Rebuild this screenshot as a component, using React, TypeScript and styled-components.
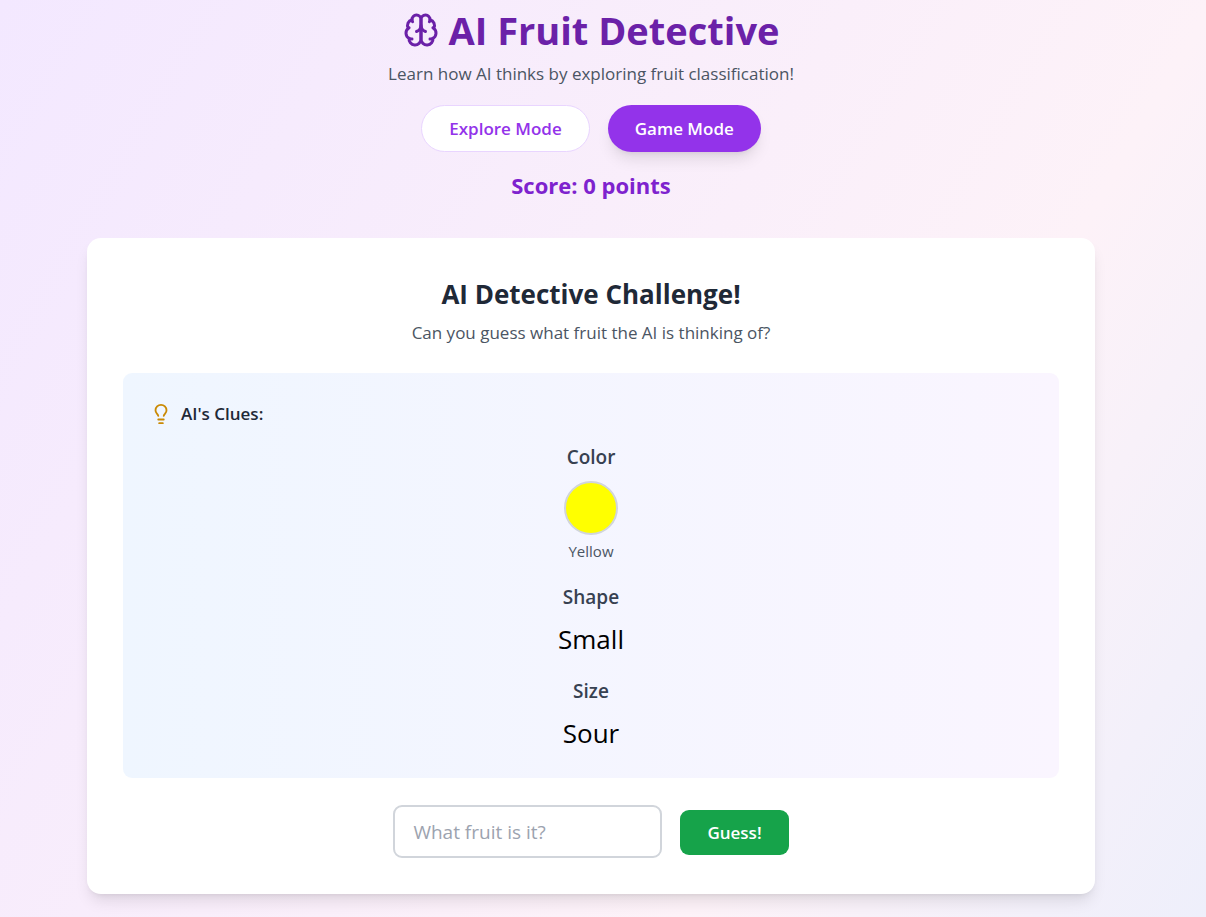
import React, { useState } from "react";
import styled, { createGlobalStyle } from "styled-components";
import { Lightbulb } from "lucide-react";

const GlobalStyle = createGlobalStyle`
  *, *::before, *::after { box-sizing: border-box; }
  body { margin: 0; }
  h1, h2, h3, h4, p { margin: 0; }
  button, input { font: inherit; }
`;

const Page = styled.div`
  min-height: 100vh;
  padding: 4px 24px 24px 0;
  font-family: "Segoe UI", "Open Sans", "Noto Sans", sans-serif;
  color: #000;
  background: linear-gradient(120deg, #f3e8ff, #fdf2f8 70%, #eeeffb);
`;

const Container = styled.main`
  max-width: 1008px;
  margin: 0 auto;
`;

const Header = styled.header`
  display: flex;
  flex-direction: column;
  align-items: center;
  text-align: center;
`;

const Title = styled.h1`
  display: flex;
  align-items: center;
  gap: 10px;
  font-size: 38px;
  line-height: 52px;
  font-weight: 700;
  color: #6b21a8;
`;

const Subtitle = styled.p`
  margin-top: 4px;
  font-size: 17px;
  line-height: 28px;
  color: #4b5563;
`;

const Modes = styled.div`
  display: flex;
  gap: 18px;
  margin-top: 17px;
`;

const ModeButton = styled.button<{ $active: boolean }>`
  padding: 0 27px;
  height: 47px;
  border: ${(p) => (p.$active ? "0" : "1px solid #e9d5ff")};
  border-radius: 24px;
  background: ${(p) => (p.$active ? "#9333ea" : "#fff")};
  color: ${(p) => (p.$active ? "#fff" : "#9333ea")};
  box-shadow: ${(p) => (p.$active ? "0 10px 15px -3px rgba(0,0,0,.1), 0 4px 6px -4px rgba(0,0,0,.1)" : "none")};
  font-size: 17px;
  font-weight: 600;
  cursor: pointer;
`;

const Score = styled.p`
  margin-top: 17px;
  font-size: 22px;
  line-height: 32px;
  font-weight: 700;
  color: #7e22ce;
`;

const Card = styled.section`
  margin-top: 37px;
  padding: 36px;
  border-radius: 14px;
  background: #fff;
  box-shadow: 0 10px 15px -3px rgba(0, 0, 0, 0.1), 0 4px 6px -4px rgba(0, 0, 0, 0.1);
  text-align: center;
`;

const CardTitle = styled.h2`
  font-size: 26px;
  line-height: 40px;
  font-weight: 700;
  color: #1f2937;
`;

const CardText = styled.p`
  margin-top: 5px;
  font-size: 17px;
  line-height: 28px;
  color: #4b5563;
`;

const Clues = styled.div`
  margin-top: 26px;
  padding: 27px;
  border-radius: 9px;
  background: linear-gradient(to right, #eff6ff, #faf5ff);
`;

const CluesTitle = styled.h3`
  display: flex;
  align-items: center;
  gap: 9px;
  font-size: 17px;
  line-height: 27px;
  font-weight: 600;
  color: #1f2937;
`;

const ClueList = styled.div`
  display: grid;
  gap: 18px;
  margin-top: 14px;
`;

const Clue = styled.div`
  display: flex;
  flex-direction: column;
  align-items: center;
`;

const ClueName = styled.h4`
  font-size: 19px;
  line-height: 32px;
  font-weight: 600;
  color: #374151;
`;

const Swatch = styled.div`
  width: 54px;
  height: 54px;
  margin-top: 8px;
  border: 2px solid #d1d5db;
  border-radius: 50%;
  background: #ff0;
`;

const SwatchName = styled.p`
  margin-top: 4px;
  font-size: 15px;
  line-height: 24px;
  color: #4b5563;
`;

const ClueValue = styled.p`
  margin-top: 8px;
  font-size: 26px;
  line-height: 36px;
`;

const GuessForm = styled.form`
  display: flex;
  justify-content: center;
  align-items: baseline;
  gap: 18px;
  margin-top: 27px;
`;

const GuessInput = styled.input`
  width: 269px;
  height: 53px;
  padding: 0 18px;
  border: 2px solid #d1d5db;
  border-radius: 9px;
  background: #fff;
  font-size: 19px;
  &::placeholder { color: #9ca3af; opacity: 1; }
`;

const GuessButton = styled.button`
  height: 45px;
  padding: 0 27px;
  border: 0;
  border-radius: 9px;
  background: #16a34a;
  color: #fff;
  font-size: 17px;
  font-weight: 600;
  cursor: pointer;
`;

function BrainIcon() {
  return (
    <svg width="36" height="36" viewBox="0 0 24 24" fill="none" stroke="currentColor" strokeWidth="2" strokeLinecap="round" strokeLinejoin="round" aria-hidden="true">
      <path d="M12 5a3 3 0 1 0-5.997.125 4 4 0 0 0-2.526 5.77 4 4 0 0 0 .556 6.588A4 4 0 1 0 12 18Z" />
      <path d="M12 5a3 3 0 1 1 5.997.125 4 4 0 0 1 2.526 5.77 4 4 0 0 1-.556 6.588A4 4 0 1 1 12 18Z" />
      <path d="M15 13a4.5 4.5 0 0 1-3-4 4.5 4.5 0 0 1-3 4" />
      <path d="M17.599 6.5a3 3 0 0 0 .399-1.375" />
      <path d="M6.003 5.125A3 3 0 0 0 6.401 6.5" />
      <path d="M3.477 10.896a4 4 0 0 1 .585-.396" />
      <path d="M19.938 10.5a4 4 0 0 1 .585.396" />
      <path d="M6 18a4 4 0 0 1-1.967-.516" />
      <path d="M19.967 17.484A4 4 0 0 1 18 18" />
    </svg>
  );
}

export default function App() {
  const [mode, setMode] = useState("game");
  return (
    <Page>
      <GlobalStyle />
      <Container>
        <Header>
          <Title><BrainIcon />AI Fruit Detective</Title>
          <Subtitle>Learn how AI thinks by exploring fruit classification!</Subtitle>
          <Modes>
            <ModeButton $active={mode === "explore"} onClick={() => setMode("explore")}>Explore Mode</ModeButton>
            <ModeButton $active={mode === "game"} onClick={() => setMode("game")}>Game Mode</ModeButton>
          </Modes>
          <Score>Score: 0 points</Score>
        </Header>
        <Card>
          <CardTitle>AI Detective Challenge!</CardTitle>
          <CardText>Can you guess what fruit the AI is thinking of?</CardText>
          <Clues>
            <CluesTitle><Lightbulb size={22} color="#ca8a04" aria-hidden />AI's Clues:</CluesTitle>
            <ClueList>
              <Clue><ClueName>Color</ClueName><Swatch /><SwatchName>Yellow</SwatchName></Clue>
              <Clue><ClueName>Shape</ClueName><ClueValue>Small</ClueValue></Clue>
              <Clue><ClueName>Size</ClueName><ClueValue>Sour</ClueValue></Clue>
            </ClueList>
          </Clues>
          <GuessForm onSubmit={(e) => e.preventDefault()}>
            <GuessInput aria-label="Your guess" placeholder="What fruit is it?" />
            <GuessButton type="submit">Guess!</GuessButton>
          </GuessForm>
        </Card>
      </Container>
    </Page>
  );
}
